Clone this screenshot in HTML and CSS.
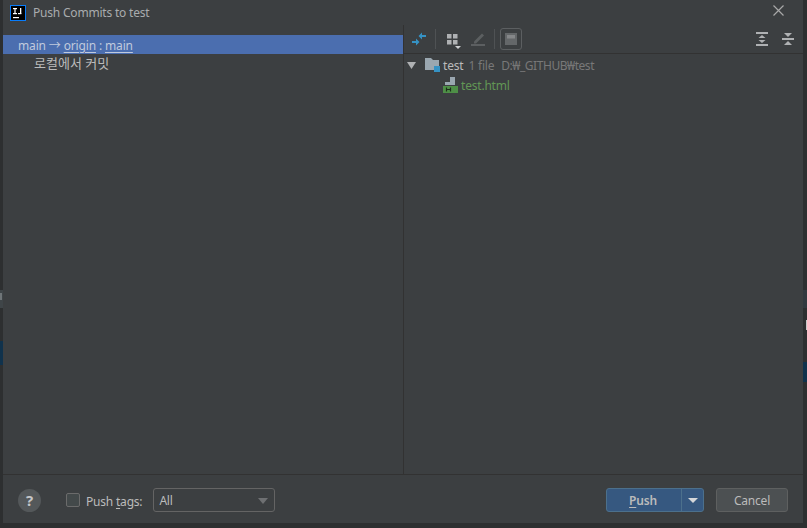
FILE: index.html
```html
<!DOCTYPE html>
<html lang="en">
<head>
  <meta charset="UTF-8">
  <meta name="viewport" content="width=device-width, initial-scale=1.0">
  <title>Push Commits to test</title>
  <link rel="stylesheet" href="styles.css">
</head>
<body>
  <div class="behind behind-left-tab"></div>
  <div class="behind behind-left-mark"></div>
  <div class="behind behind-left-bar"></div>
  <div class="behind behind-right-top"></div>
  <div class="behind behind-right-mark"></div>
  <div class="behind behind-right-bar"></div>

  <div class="dialog">
    <div class="titlebar">
      <svg class="app-icon" width="16" height="16" viewBox="0 0 16 16">
        <rect x="0.5" y="0.5" width="15" height="15" fill="#000" stroke="#087cfa"/>
        <rect x="3" y="3" width="4" height="1.2" fill="#fff"/>
        <rect x="4.4" y="3" width="1.2" height="6" fill="#fff"/>
        <rect x="3" y="8" width="4" height="1.2" fill="#fff"/>
        <rect x="10" y="3" width="1.3" height="6" fill="#fff"/>
        <rect x="8" y="8" width="3.3" height="1.2" fill="#fff"/>
        <rect x="3" y="12" width="6" height="1.2" fill="#fff"/>
      </svg>
      <span class="title">Push Commits to test</span>
      <svg class="close" width="11" height="11" viewBox="0 0 11 11">
        <path d="M0.500 0.500l10 10M10.500 0.500l-10 10" stroke="#a8a8a8" stroke-width="1.2" fill="none"/>
      </svg>
    </div>

    <div class="main">
      <div class="left-pane">
        <div class="branch-row">main → <u>origin</u> : <u>main</u></div>
        <div class="commit-row">로컬에서 커밋</div>
      </div>

      <div class="right-pane">
        <div class="toolbar">
          <svg class="tool tool-sync" width="16" height="16" viewBox="0 0 16 16">
            <path d="M15 4H11V1.500L7.500 5 11 8.500V6H15z" fill="#3592c4"/>
            <path d="M1 10H5V7.500L8.500 11 5 14.500V12H1z" fill="#3592c4"/>
          </svg>
          <span class="tool-sep"></span>
          <svg class="tool tool-group" width="16" height="18" viewBox="0 0 16 18">
            <rect x="2" y="3" width="4.500" height="4.500" fill="#afb1b3"/>
            <rect x="8" y="3" width="4.500" height="4.500" fill="#afb1b3"/>
            <rect x="2" y="9" width="4.500" height="4.500" fill="#afb1b3"/>
            <rect x="8" y="9" width="4.500" height="4.500" fill="#afb1b3"/>
            <path d="M10 15h6l-3 3z" fill="#cfd1d3"/>
          </svg>
          <svg class="tool tool-edit" width="16" height="16" viewBox="0 0 16 16">
            <path d="M4 10.500L12 2.500l2 2-8 8H4z" fill="#5c5f61"/>
            <rect x="1" y="13" width="14" height="2" fill="#5c5f61"/>
          </svg>
          <span class="tool-sep tool-sep-second"></span>
          <span class="tool-toggle">
            <svg width="12" height="12" viewBox="0 0 12 12">
              <rect width="12" height="12" fill="#646769"/>
              <rect x="2" y="2" width="8" height="3.500" fill="#858789"/>
            </svg>
          </span>
          <span class="toolbar-gap"></span>
          <svg class="tool" width="14" height="16" viewBox="0 0 14 16">
            <path d="M1 1h12v2H1zM1 13h12v2H1z" fill="#afb1b3"/>
            <path d="M7 4l3.500 3H3.500zM7 12L3.500 9h7z" fill="#afb1b3"/>
          </svg>
          <svg class="tool tool-collapse" width="14" height="16" viewBox="0 0 14 16">
            <path d="M1 7h12v2H1z" fill="#afb1b3"/>
            <path d="M3 2h8L7 6zM7 10l4 4H3z" fill="#afb1b3"/>
          </svg>
        </div>

        <div class="tree">
          <div class="tree-root">
            <svg class="arrow" width="9" height="7" viewBox="0 0 9 7"><path d="M0 0h9L4.500 7z" fill="#afb1b3"/></svg>
            <svg class="folder" width="15" height="15" viewBox="0 0 15 15">
              <path d="M0 0h6l2 2h6v10H0z" fill="#9aa7b0"/>
              <rect x="9" y="8" width="6" height="6" fill="#3592c4"/>
            </svg>
            <span class="root-name">test</span>
            <span class="root-info">1 file</span>
            <span class="root-info">D:₩_GITHUB₩test</span>
          </div>
          <div class="tree-file">
            <svg class="html-icon" width="16" height="16" viewBox="0 0 16 16">
              <path d="M7 0h5v8H2V5h5z" fill="#9aa7b0"/>
              <rect x="0" y="9" width="15" height="7" fill="#4e8f47"/>
              <path d="M3.500 10.500v4M7.500 10.500v4M3.500 12.500h4" stroke="#1d2f1a" stroke-width="1.200" fill="none"/>
            </svg>
            <span class="file-name">test.html</span>
          </div>
        </div>
      </div>
    </div>

    <div class="footer">
      <span class="help">?</span>
      <label class="tags">
        <span class="checkbox"></span>
        <span class="tags-text">Push <u>t</u>ags:</span>
      </label>
      <div class="tags-select">
        <span>All</span>
        <span class="select-arrow"></span>
      </div>
      <span class="footer-gap"></span>
      <div class="push-button">
        <span class="push-label"><u>P</u>ush</span>
        <span class="push-drop"><span class="drop-arrow"></span></span>
      </div>
      <div class="cancel-button">Cancel</div>
    </div>
  </div>
</body>
</html>
```

FILE: styles.css
```css
* {
  box-sizing: border-box;
}
html, body {
  margin: 0;
  height: 100%;
}
body {
  background-color: #2d2f30;
  font-family: "Noto Sans", "Noto Sans CJK KR", sans-serif;
  font-size: 12px;
  letter-spacing: -0.2px;
  color: #bbbbbb;
  overflow: hidden;
  position: relative;
  padding: 0 4px 5px 3px;
}
u {
  text-underline-offset: 2px;
}

/* bits of the IDE window showing round the dialog */
.behind {
  position: absolute;
}
.behind-left-tab {
  left: 0;
  top: 290px;
  width: 3px;
  height: 18px;
  background: #3f4548;
}
.behind-left-mark {
  left: 0;
  top: 293px;
  width: 2px;
  height: 7px;
  background: #6f7578;
}
.behind-left-bar {
  left: 0;
  top: 341px;
  width: 3px;
  height: 24px;
  background: #10324c;
}
.behind-right-top {
  right: 0;
  top: 290px;
  width: 4px;
  height: 18px;
  background: #32393f;
}
.behind-right-mark {
  right: 0;
  top: 320px;
  width: 1px;
  height: 10px;
  background: #c8c8c8;
}
.behind-right-bar {
  right: 0;
  top: 362px;
  width: 4px;
  height: 20px;
  background: #10324c;
}

.dialog {
  position: relative;
  height: 100%;
  background: #3c3f41;
  display: flex;
  flex-direction: column;
}
.titlebar {
  height: 25px;
  display: flex;
  align-items: center;
  padding-left: 7px;
  padding-right: 19px;
}
.app-icon {
  margin-right: 7px;
}
.title {
  font-size: 12px;
  color: #a9acae;
  flex: 1;
}
.close {
  margin-top: -4px;
}
.main {
  flex: 1;
  display: flex;
  min-height: 0;
  border-bottom: 1px solid #323232;
}
.left-pane {
  width: 401px;
  border-right: 1px solid #323232;
  padding-top: 10px;
}
.branch-row {
  height: 19px;
  line-height: 21px;
  background: #4b6eaf;
  color: #c0cadd;
  padding-left: 15px;
  letter-spacing: -0.15px;
}
.commit-row {
  height: 19px;
  line-height: 19px;
  padding-left: 31px;
  font-size: 13px;
  letter-spacing: 0;
  color: #bbbbbb;
}
.right-pane {
  flex: 1;
  display: flex;
  flex-direction: column;
}
.toolbar {
  height: 29px;
  display: flex;
  align-items: center;
  border-bottom: 1px solid #323232;
  padding-left: 7px;
  padding-right: 8px;
}
.tool-sep {
  width: 1px;
  height: 20px;
  margin-left: 8px;
  background: #4f5254;
}
.tool-group {
  margin-top: 2px;
  margin-left: 9px;
}
.tool-edit {
  margin-left: 9px;
}
.tool-toggle {
  width: 22px;
  height: 22px;
  margin-left: 5px;
  border: 1px solid #5c5f61;
  border-radius: 3px;
  display: flex;
  align-items: center;
  justify-content: center;
}
.toolbar-gap {
  flex: 1;
}
.tool-collapse {
  margin-left: 12px;
}
.tree {
  padding-top: 1px;
}
.tree-root,
.tree-file {
  display: flex;
  align-items: center;
  height: 20px;
}
.tree-root {
  padding-left: 3px;
}
.arrow {
  margin-right: 9px;
}
.folder {
  margin-right: 3px;
}
.root-name {
  color: #bbbbbb;
  margin-right: 5px;
}
.root-info {
  color: #787878;
  margin-right: 7px;
}
.root-info:last-child {
  letter-spacing: -0.45px;
}
.tree-file {
  padding-left: 39px;
}
.html-icon {
  margin-right: 2px;
}
.file-name {
  color: #629755;
}
.footer {
  height: 48px;
  display: flex;
  align-items: center;
  padding: 2px 15px 0 15px;
}
.help {
  width: 23px;
  height: 23px;
  border-radius: 50%;
  background: #54585a;
  color: #c4c6c8;
  font-weight: 700;
  font-size: 15px;
  display: flex;
  align-items: center;
  justify-content: center;
  margin-right: 25px;
}
.tags {
  display: flex;
  align-items: center;
  gap: 6px;
  margin-right: 11px;
}
.tags-text {
  padding-top: 2px;
}
.checkbox {
  width: 14px;
  height: 14px;
  border: 1px solid #6b6b6b;
  border-radius: 2px;
  background: #43494a;
}
.tags-select {
  width: 122px;
  height: 24px;
  border: 1px solid #646464;
  border-radius: 3px;
  display: flex;
  align-items: center;
  justify-content: space-between;
  padding: 1px 6px 0 5px;
}
.select-arrow,
.drop-arrow {
  width: 0;
  height: 0;
  border-left: 5px solid transparent;
  border-right: 5px solid transparent;
}
.select-arrow {
  border-top: 6px solid #6e7072;
}
.drop-arrow {
  border-top: 5px solid #d5d7d9;
}
.footer-gap {
  flex: 1;
}
.push-button {
  width: 98px;
  height: 24px;
  background: #365880;
  border: 1px solid #4c708c;
  border-radius: 3px;
  display: flex;
  color: #bbbbbb;
  margin-right: 12px;
}
.push-label {
  flex: 1;
  text-align: center;
  line-height: 24px;
  font-weight: 600;
  padding-right: 2px;
}
.push-drop {
  width: 22px;
  border-left: 1px solid #4c708c;
  display: flex;
  align-items: center;
  justify-content: center;
}
.cancel-button {
  width: 72px;
  height: 24px;
  background: #4c5052;
  border: 1px solid #5e6060;
  border-radius: 3px;
  text-align: center;
  line-height: 24px;
  color: #bbbbbb;
}
```
